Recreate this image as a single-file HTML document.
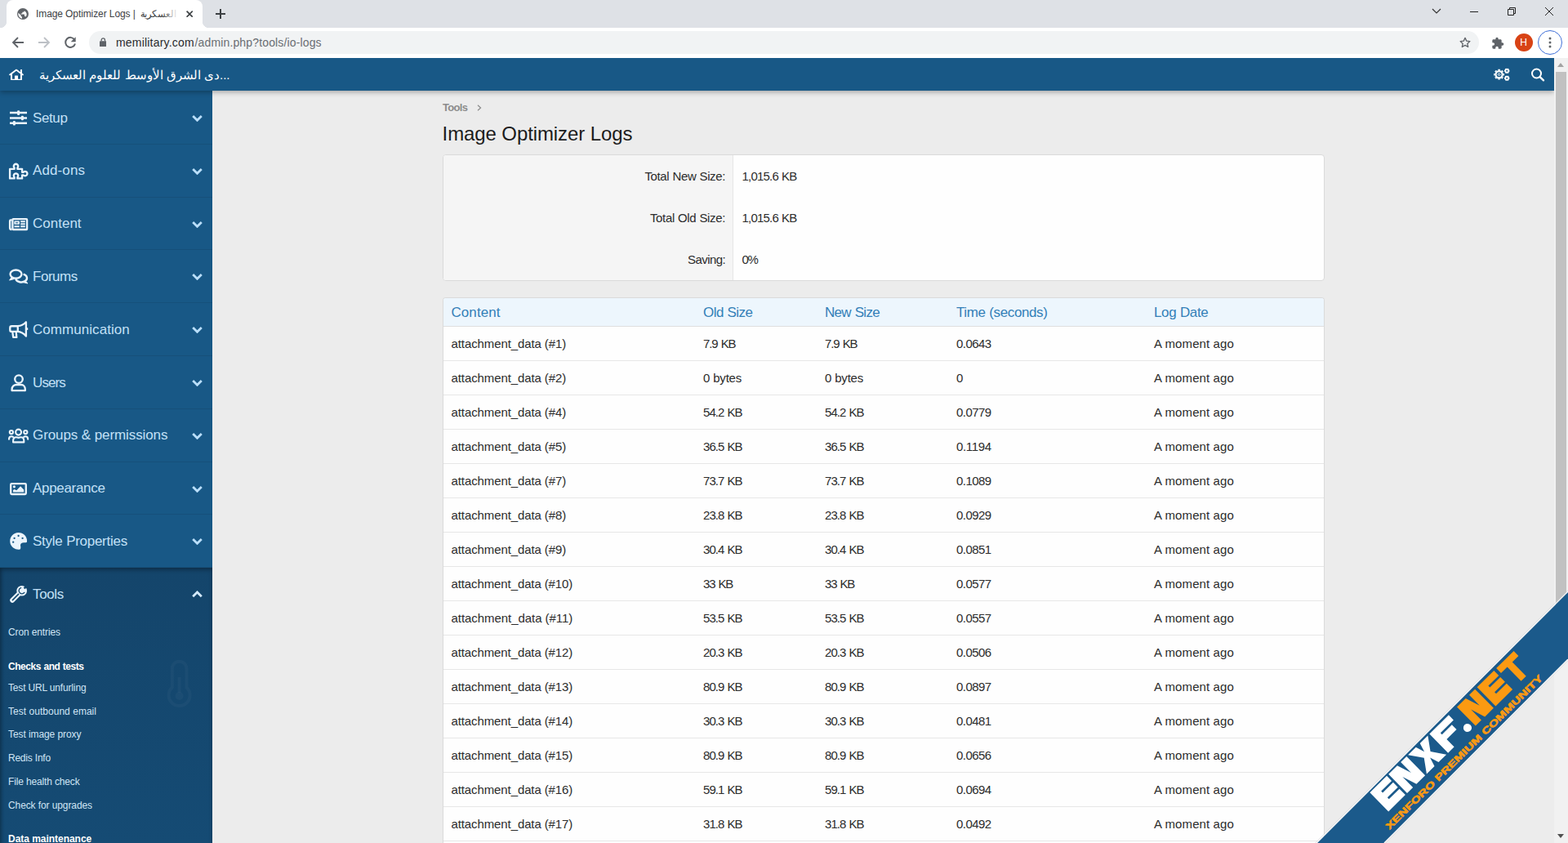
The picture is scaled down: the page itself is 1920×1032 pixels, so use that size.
<!DOCTYPE html>
<html lang="en"><head><meta charset="utf-8"><title>Image Optimizer Logs</title>
<style>
*{box-sizing:border-box;margin:0;padding:0}
html,body{width:1920px;height:1032px;overflow:hidden;background:#fff;font-family:"Liberation Sans",sans-serif;}
body{position:relative}
#chrome{position:absolute;left:0;top:0;width:1920px;height:71px;background:#fff}
#tabstrip{position:absolute;left:0;top:0;width:1920px;height:34px;background:#dee1e6}
#tab{position:absolute;left:8px;top:0;width:240px;height:34px;background:#fff;border-radius:8px 8px 0 0}
#tab:before,#tab:after{content:"";position:absolute;bottom:0;width:8px;height:8px;background:radial-gradient(circle at 0 0,#dee1e6 8px,#fff 8.5px)}
#tab:before{left:-8px}
#tab:after{right:-8px;background:radial-gradient(circle at 100% 0,#dee1e6 8px,#fff 8.5px)}
#omni{position:absolute;left:109px;top:38px;width:1702px;height:28px;border-radius:14px;background:#f1f3f4}
.ico{position:absolute}
#page{position:absolute;left:0;top:71px;width:1920px;height:961px;background:#ececec;overflow:hidden}
#hdr{position:absolute;left:0;top:0;width:1903px;height:40px;background:#185886;box-shadow:0 2px 6px rgba(0,0,0,.3)}
#side{position:absolute;left:0;top:40px;width:260px;height:921px;background:#185886}
.nav{position:absolute;left:0;width:260px;height:65px;border-bottom:1px solid #16507a}
svg.ch{position:absolute}
#tools{position:absolute;left:0;top:584px;width:260px;height:340px;background:linear-gradient(#14456b,#154b74);box-shadow:inset 0 3px 5px rgba(0,0,0,.28),inset 3px 0 4px -1px rgba(0,0,0,.18)}
#vscroll{position:absolute;left:1903px;top:0;width:17px;height:961px;background:#f1f1f1}
#vscroll .thumb{position:absolute;left:2px;top:17px;width:13px;height:700px;background:#c1c1c1}
#vscroll .up{position:absolute;left:4px;top:6px;width:0;height:0;border:4.5px solid transparent;border-top:0;border-bottom:5px solid #a3a3a3}
#vscroll .down{position:absolute;left:4px;bottom:6px;width:0;height:0;border:4.5px solid transparent;border-bottom:0;border-top:5px solid #505050}
#main{position:absolute;left:0;top:-71px;width:1903px;height:1032px}
.block{position:absolute;left:542px;width:1080px;background:#fefefe;border:1px solid #dadada;border-radius:4px}
.b1{top:189px;height:155px}
.b1 .lab{position:absolute;left:0;top:0;width:355px;height:153px;background:#f5f5f5;border-right:1px solid #e7e7e7;border-radius:3px 0 0 3px}
.b2{top:364px;height:700px;border-bottom:0}
.th{position:absolute;left:0;top:0;width:1078px;height:35px;background:#edf6fd;border-bottom:1px solid #dfdfdf;border-radius:3px 3px 0 0}
.tr{position:absolute;left:543px;width:1078px;height:42px;border-bottom:1px solid #e7e7e7}

.t{position:absolute;white-space:nowrap;font-kerning:normal}
.abs0{position:absolute;left:0;width:0;height:0}

</style></head>
<body>
<div id="chrome">
  <div id="tabstrip">
    <div id="tab">
      <svg class="ico" style="left:13px;top:10px" width="14" height="14" viewBox="0 0 24 24"><circle cx="12" cy="12" r="12" fill="#5f6368"/><path d="M10.5 21.9c-4.7-.7-8.3-4.7-8.3-9.9 0-.7.1-1.5.3-2.2L8 15v1c0 1.100.9 2 2 2zM18.400 18.400c-.3-.8-1-1.400-1.900-1.400h-1v-3c0-.55-.45-1-1-1H8v-2h2c.55 0 1-.45 1-1V8h2c1.100 0 2-.9 2-2v-.4c2.900 1.200 5 4.100 5 7.400 0 2.100-.8 4-2.100 5.400z" fill="#fff"/></svg>
            <svg class="ico" style="left:219.900px;top:13.100px" width="8.400" height="8.400" viewBox="0 0 8.400 8.400"><path d="M0.600 0.600L7.800 7.800M7.800 0.600L0.600 7.800" stroke="#3c4043" stroke-width="1.700" fill="none"/></svg>
    </div>
    <svg class="ico" style="left:264px;top:11px" width="12" height="12" viewBox="0 0 12 12"><path d="M6 0V12M0 6H12" stroke="#3c4043" stroke-width="2" fill="none"/></svg>
    <svg class="ico" style="left:1753px;top:10px" width="12" height="8" viewBox="0 0 12 8"><path d="M1 1L6 6L11 1" stroke="#333" stroke-width="1.200" fill="none"/></svg>
    <div class="ico" style="left:1800px;top:14px;width:10px;height:1px;background:#222"></div>
    <svg class="ico" style="left:1846px;top:9px" width="10" height="10" viewBox="0 0 10 10"><path d="M0.500 2.500H7.500V9.500H0.500ZM2.500 2.500V0.500H9.500V7.500H7.500" stroke="#222" stroke-width="1" fill="none"/></svg>
    <svg class="ico" style="left:1892px;top:9px" width="10" height="10" viewBox="0 0 10 10"><path d="M0 0L10 10M10 0L0 10" stroke="#222" stroke-width="1" fill="none"/></svg>
  </div>
  <!-- toolbar -->
  <svg class="ico" style="left:14px;top:44px" width="16" height="16" viewBox="0 0 16 16"><path d="M15 8H2M8 2L2 8L8 14" stroke="#5f6368" stroke-width="1.800" fill="none"/></svg>
  <svg class="ico" style="left:46px;top:44px" width="16" height="16" viewBox="0 0 16 16"><path d="M1 8H14M8 2L14 8L8 14" stroke="#bdc1c6" stroke-width="1.800" fill="none"/></svg>
  <svg class="ico" style="left:78px;top:44px" width="16" height="16" viewBox="0 0 16 16"><path d="M13.200 4.500A6 6 0 1 0 14 9.500" stroke="#5f6368" stroke-width="2" fill="none"/><path d="M14.700 1.200V7.200H8.700z" fill="#5f6368"/></svg>
  <div id="omni"></div>
  <svg class="ico" style="left:121.700px;top:46px" width="8.600" height="11.200" viewBox="0 0 10 13"><rect x="0" y="5" width="10" height="8" rx="1" fill="#5f6368"/><path d="M2.500 5V3.500a2.500 2.500 0 0 1 5 0V5" stroke="#5f6368" stroke-width="1.500" fill="none"/></svg>
  <span class="t" style="left:44px;top:11.04px;font-size:12px;line-height:12px;color:#3c4043;letter-spacing:-0.097px;">Image Optimizer Logs | </span><span class="t" style="left:142px;top:45.15px;font-size:14px;line-height:14px;color:#2a2b2e;letter-spacing:0.194px;">memilitary.com</span><span class="t" style="left:238.5px;top:45.15px;font-size:14px;line-height:14px;color:#6a6e73;letter-spacing:0.146px;">/admin.php?tools/io-logs</span><svg class="ico" style="left:170.5px;top:8.3px" width="45" height="17.00" viewBox="0 0 43.0 17.0" preserveAspectRatio="none"><defs><linearGradient id="fade" x1="0" x2="1" y1="0" y2="0"><stop offset="0.6" stop-color="#3c4043"/><stop offset="1" stop-color="#3c4043" stop-opacity="0.15"/></linearGradient></defs><text x="21.5" y="12.9" text-anchor="middle" font-family="'Liberation Sans', sans-serif" font-size="12" fill="url(#fade)" textLength="42" lengthAdjust="spacingAndGlyphs">العسكرية</text></svg>
  <svg class="ico" style="left:1786px;top:44px" width="16" height="16" viewBox="0 0 24 24"><path d="M12 3.500l2.600 5.700 6.200.7-4.600 4.200 1.300 6.100L12 17l-5.500 3.200 1.300-6.100L3.200 9.900l6.200-.7z" stroke="#5f6368" stroke-width="2" fill="none" stroke-linejoin="round"/></svg>
  <svg class="ico" style="left:1826px;top:44.500px" width="16" height="16" viewBox="0 0 24 24"><path d="M20.500 11H19V7c0-1.100-.9-2-2-2h-4V3.500a2.500 2.500 0 0 0-5 0V5H4c-1.100 0-2 .9-2 2v3.800h1.500a2.700 2.700 0 0 1 0 5.400H2V20c0 1.100.9 2 2 2h3.800v-1.500a2.700 2.700 0 0 1 5.400 0V22H17c1.100 0 2-.9 2-2v-4h1.500a2.500 2.500 0 0 0 0-5z" fill="#5f6368"/></svg>
  <div class="ico" style="left:1855px;top:41px;width:22px;height:22px;border-radius:11px;background:#d84315"></div><span class="t" style="left:1861.2px;top:46.14px;font-size:12px;line-height:12px;color:#fff;">H</span>
  <div class="ico" style="left:1883.300px;top:37px;width:29.600px;height:29.600px;border-radius:15px;border:1.700px solid #4070d8;background:#fff"></div>
  <svg class="ico" style="left:1896px;top:45px" width="4" height="14" viewBox="0 0 4 14"><circle cx="2" cy="2" r="1.500" fill="#5f6368"/><circle cx="2" cy="7" r="1.500" fill="#5f6368"/><circle cx="2" cy="12" r="1.500" fill="#5f6368"/></svg>
</div>

<div id="page">

<div id="main">
  <svg class="ico" style="left:584px;top:127.5px" width="6" height="8" viewBox="0 0 6 8"><path d="M1 0.7L4.6 4L1 7.3" stroke="#8c8c8c" stroke-width="1.2" fill="none"/></svg>
  <div class="block b1"><div class="lab"></div></div>
  <div class="block b2"><div class="th"></div></div>
  <div class="tr" style="top:400px"></div><div class="tr" style="top:442px"></div><div class="tr" style="top:484px"></div><div class="tr" style="top:526px"></div><div class="tr" style="top:568px"></div><div class="tr" style="top:610px"></div><div class="tr" style="top:652px"></div><div class="tr" style="top:694px"></div><div class="tr" style="top:736px"></div><div class="tr" style="top:778px"></div><div class="tr" style="top:820px"></div><div class="tr" style="top:862px"></div><div class="tr" style="top:904px"></div><div class="tr" style="top:946px"></div><div class="tr" style="top:988px"></div>
  <span class="t" style="left:542px;top:124.90px;font-size:13px;line-height:13px;color:#8c8c8c;font-weight:700;letter-spacing:-0.667px;">Tools</span><span class="t" style="left:541.6px;top:151.88px;font-size:24px;line-height:24px;color:#1c1c1c;letter-spacing:-0.101px;">Image Optimizer Logs</span><span class="t" style="right:1015px;top:207.70px;font-size:15px;line-height:15px;color:#2c2c2c;letter-spacing:-0.374px;word-spacing:0.374px;">Total New Size:</span><span class="t" style="left:908.5px;top:207.70px;font-size:15px;line-height:15px;color:#2c2c2c;letter-spacing:-0.804px;word-spacing:0.804px;">1,015.6 KB</span><span class="t" style="right:1015px;top:258.70px;font-size:15px;line-height:15px;color:#2c2c2c;letter-spacing:-0.361px;word-spacing:0.361px;">Total Old Size:</span><span class="t" style="left:908.5px;top:258.70px;font-size:15px;line-height:15px;color:#2c2c2c;letter-spacing:-0.804px;word-spacing:0.804px;">1,015.6 KB</span><span class="t" style="right:1015px;top:309.70px;font-size:15px;line-height:15px;color:#2c2c2c;letter-spacing:-0.592px;">Saving:</span><span class="t" style="left:908.5px;top:309.70px;font-size:15px;line-height:15px;color:#2c2c2c;letter-spacing:-1.392px;">0%</span><span class="t" style="left:552.5px;top:373.81px;font-size:17px;line-height:17px;color:#3380b8;letter-spacing:0.070px;">Content</span><span class="t" style="left:861px;top:373.81px;font-size:17px;line-height:17px;color:#3380b8;letter-spacing:-0.546px;word-spacing:0.546px;">Old Size</span><span class="t" style="left:1010px;top:373.81px;font-size:17px;line-height:17px;color:#3380b8;letter-spacing:-0.679px;word-spacing:0.679px;">New Size</span><span class="t" style="left:1171px;top:373.81px;font-size:17px;line-height:17px;color:#3380b8;letter-spacing:-0.385px;word-spacing:0.385px;">Time (seconds)</span><span class="t" style="left:1413px;top:373.81px;font-size:17px;line-height:17px;color:#3380b8;letter-spacing:-0.385px;word-spacing:0.385px;">Log Date</span><span class="t" style="left:552.5px;top:413.00px;font-size:15px;line-height:15px;color:#2c2c2c;letter-spacing:-0.097px;">attachment_data (#1)</span><span class="t" style="left:861px;top:413.00px;font-size:15px;line-height:15px;color:#2c2c2c;letter-spacing:-1.116px;word-spacing:1.116px;">7.9 KB</span><span class="t" style="left:1010px;top:413.00px;font-size:15px;line-height:15px;color:#2c2c2c;letter-spacing:-1.116px;word-spacing:1.116px;">7.9 KB</span><span class="t" style="left:1171px;top:413.00px;font-size:15px;line-height:15px;color:#2c2c2c;letter-spacing:-0.553px;">0.0643</span><span class="t" style="left:1413px;top:413.00px;font-size:15px;line-height:15px;color:#2c2c2c;letter-spacing:0.093px;">A moment ago</span><span class="t" style="left:552.5px;top:455.00px;font-size:15px;line-height:15px;color:#2c2c2c;letter-spacing:-0.097px;">attachment_data (#2)</span><span class="t" style="left:861px;top:455.00px;font-size:15px;line-height:15px;color:#2c2c2c;letter-spacing:-0.181px;">0 bytes</span><span class="t" style="left:1010px;top:455.00px;font-size:15px;line-height:15px;color:#2c2c2c;letter-spacing:-0.181px;">0 bytes</span><span class="t" style="left:1171px;top:455.00px;font-size:15px;line-height:15px;color:#2c2c2c;">0</span><span class="t" style="left:1413px;top:455.00px;font-size:15px;line-height:15px;color:#2c2c2c;letter-spacing:0.093px;">A moment ago</span><span class="t" style="left:552.5px;top:497.00px;font-size:15px;line-height:15px;color:#2c2c2c;letter-spacing:-0.097px;">attachment_data (#4)</span><span class="t" style="left:861px;top:497.00px;font-size:15px;line-height:15px;color:#2c2c2c;letter-spacing:-0.961px;word-spacing:0.961px;">54.2 KB</span><span class="t" style="left:1010px;top:497.00px;font-size:15px;line-height:15px;color:#2c2c2c;letter-spacing:-0.961px;word-spacing:0.961px;">54.2 KB</span><span class="t" style="left:1171px;top:497.00px;font-size:15px;line-height:15px;color:#2c2c2c;letter-spacing:-0.553px;">0.0779</span><span class="t" style="left:1413px;top:497.00px;font-size:15px;line-height:15px;color:#2c2c2c;letter-spacing:0.093px;">A moment ago</span><span class="t" style="left:552.5px;top:539.00px;font-size:15px;line-height:15px;color:#2c2c2c;letter-spacing:-0.097px;">attachment_data (#5)</span><span class="t" style="left:861px;top:539.00px;font-size:15px;line-height:15px;color:#2c2c2c;letter-spacing:-0.961px;word-spacing:0.961px;">36.5 KB</span><span class="t" style="left:1010px;top:539.00px;font-size:15px;line-height:15px;color:#2c2c2c;letter-spacing:-0.961px;word-spacing:0.961px;">36.5 KB</span><span class="t" style="left:1171px;top:539.00px;font-size:15px;line-height:15px;color:#2c2c2c;letter-spacing:-0.348px;">0.1194</span><span class="t" style="left:1413px;top:539.00px;font-size:15px;line-height:15px;color:#2c2c2c;letter-spacing:0.093px;">A moment ago</span><span class="t" style="left:552.5px;top:581.00px;font-size:15px;line-height:15px;color:#2c2c2c;letter-spacing:-0.097px;">attachment_data (#7)</span><span class="t" style="left:861px;top:581.00px;font-size:15px;line-height:15px;color:#2c2c2c;letter-spacing:-0.961px;word-spacing:0.961px;">73.7 KB</span><span class="t" style="left:1010px;top:581.00px;font-size:15px;line-height:15px;color:#2c2c2c;letter-spacing:-0.961px;word-spacing:0.961px;">73.7 KB</span><span class="t" style="left:1171px;top:581.00px;font-size:15px;line-height:15px;color:#2c2c2c;letter-spacing:-0.553px;">0.1089</span><span class="t" style="left:1413px;top:581.00px;font-size:15px;line-height:15px;color:#2c2c2c;letter-spacing:0.093px;">A moment ago</span><span class="t" style="left:552.5px;top:623.00px;font-size:15px;line-height:15px;color:#2c2c2c;letter-spacing:-0.097px;">attachment_data (#8)</span><span class="t" style="left:861px;top:623.00px;font-size:15px;line-height:15px;color:#2c2c2c;letter-spacing:-0.961px;word-spacing:0.961px;">23.8 KB</span><span class="t" style="left:1010px;top:623.00px;font-size:15px;line-height:15px;color:#2c2c2c;letter-spacing:-0.961px;word-spacing:0.961px;">23.8 KB</span><span class="t" style="left:1171px;top:623.00px;font-size:15px;line-height:15px;color:#2c2c2c;letter-spacing:-0.553px;">0.0929</span><span class="t" style="left:1413px;top:623.00px;font-size:15px;line-height:15px;color:#2c2c2c;letter-spacing:0.093px;">A moment ago</span><span class="t" style="left:552.5px;top:665.00px;font-size:15px;line-height:15px;color:#2c2c2c;letter-spacing:-0.097px;">attachment_data (#9)</span><span class="t" style="left:861px;top:665.00px;font-size:15px;line-height:15px;color:#2c2c2c;letter-spacing:-0.961px;word-spacing:0.961px;">30.4 KB</span><span class="t" style="left:1010px;top:665.00px;font-size:15px;line-height:15px;color:#2c2c2c;letter-spacing:-0.961px;word-spacing:0.961px;">30.4 KB</span><span class="t" style="left:1171px;top:665.00px;font-size:15px;line-height:15px;color:#2c2c2c;letter-spacing:-0.553px;">0.0851</span><span class="t" style="left:1413px;top:665.00px;font-size:15px;line-height:15px;color:#2c2c2c;letter-spacing:0.093px;">A moment ago</span><span class="t" style="left:552.5px;top:707.00px;font-size:15px;line-height:15px;color:#2c2c2c;letter-spacing:-0.105px;">attachment_data (#10)</span><span class="t" style="left:861px;top:707.00px;font-size:15px;line-height:15px;color:#2c2c2c;letter-spacing:-1.176px;word-spacing:1.176px;">33 KB</span><span class="t" style="left:1010px;top:707.00px;font-size:15px;line-height:15px;color:#2c2c2c;letter-spacing:-1.176px;word-spacing:1.176px;">33 KB</span><span class="t" style="left:1171px;top:707.00px;font-size:15px;line-height:15px;color:#2c2c2c;letter-spacing:-0.553px;">0.0577</span><span class="t" style="left:1413px;top:707.00px;font-size:15px;line-height:15px;color:#2c2c2c;letter-spacing:0.093px;">A moment ago</span><span class="t" style="left:552.5px;top:749.00px;font-size:15px;line-height:15px;color:#2c2c2c;letter-spacing:-0.051px;">attachment_data (#11)</span><span class="t" style="left:861px;top:749.00px;font-size:15px;line-height:15px;color:#2c2c2c;letter-spacing:-0.961px;word-spacing:0.961px;">53.5 KB</span><span class="t" style="left:1010px;top:749.00px;font-size:15px;line-height:15px;color:#2c2c2c;letter-spacing:-0.961px;word-spacing:0.961px;">53.5 KB</span><span class="t" style="left:1171px;top:749.00px;font-size:15px;line-height:15px;color:#2c2c2c;letter-spacing:-0.553px;">0.0557</span><span class="t" style="left:1413px;top:749.00px;font-size:15px;line-height:15px;color:#2c2c2c;letter-spacing:0.093px;">A moment ago</span><span class="t" style="left:552.5px;top:791.00px;font-size:15px;line-height:15px;color:#2c2c2c;letter-spacing:-0.105px;">attachment_data (#12)</span><span class="t" style="left:861px;top:791.00px;font-size:15px;line-height:15px;color:#2c2c2c;letter-spacing:-0.961px;word-spacing:0.961px;">20.3 KB</span><span class="t" style="left:1010px;top:791.00px;font-size:15px;line-height:15px;color:#2c2c2c;letter-spacing:-0.961px;word-spacing:0.961px;">20.3 KB</span><span class="t" style="left:1171px;top:791.00px;font-size:15px;line-height:15px;color:#2c2c2c;letter-spacing:-0.553px;">0.0506</span><span class="t" style="left:1413px;top:791.00px;font-size:15px;line-height:15px;color:#2c2c2c;letter-spacing:0.093px;">A moment ago</span><span class="t" style="left:552.5px;top:833.00px;font-size:15px;line-height:15px;color:#2c2c2c;letter-spacing:-0.105px;">attachment_data (#13)</span><span class="t" style="left:861px;top:833.00px;font-size:15px;line-height:15px;color:#2c2c2c;letter-spacing:-0.961px;word-spacing:0.961px;">80.9 KB</span><span class="t" style="left:1010px;top:833.00px;font-size:15px;line-height:15px;color:#2c2c2c;letter-spacing:-0.961px;word-spacing:0.961px;">80.9 KB</span><span class="t" style="left:1171px;top:833.00px;font-size:15px;line-height:15px;color:#2c2c2c;letter-spacing:-0.553px;">0.0897</span><span class="t" style="left:1413px;top:833.00px;font-size:15px;line-height:15px;color:#2c2c2c;letter-spacing:0.093px;">A moment ago</span><span class="t" style="left:552.5px;top:875.00px;font-size:15px;line-height:15px;color:#2c2c2c;letter-spacing:-0.105px;">attachment_data (#14)</span><span class="t" style="left:861px;top:875.00px;font-size:15px;line-height:15px;color:#2c2c2c;letter-spacing:-0.961px;word-spacing:0.961px;">30.3 KB</span><span class="t" style="left:1010px;top:875.00px;font-size:15px;line-height:15px;color:#2c2c2c;letter-spacing:-0.961px;word-spacing:0.961px;">30.3 KB</span><span class="t" style="left:1171px;top:875.00px;font-size:15px;line-height:15px;color:#2c2c2c;letter-spacing:-0.553px;">0.0481</span><span class="t" style="left:1413px;top:875.00px;font-size:15px;line-height:15px;color:#2c2c2c;letter-spacing:0.093px;">A moment ago</span><span class="t" style="left:552.5px;top:917.00px;font-size:15px;line-height:15px;color:#2c2c2c;letter-spacing:-0.105px;">attachment_data (#15)</span><span class="t" style="left:861px;top:917.00px;font-size:15px;line-height:15px;color:#2c2c2c;letter-spacing:-0.961px;word-spacing:0.961px;">80.9 KB</span><span class="t" style="left:1010px;top:917.00px;font-size:15px;line-height:15px;color:#2c2c2c;letter-spacing:-0.961px;word-spacing:0.961px;">80.9 KB</span><span class="t" style="left:1171px;top:917.00px;font-size:15px;line-height:15px;color:#2c2c2c;letter-spacing:-0.553px;">0.0656</span><span class="t" style="left:1413px;top:917.00px;font-size:15px;line-height:15px;color:#2c2c2c;letter-spacing:0.093px;">A moment ago</span><span class="t" style="left:552.5px;top:959.00px;font-size:15px;line-height:15px;color:#2c2c2c;letter-spacing:-0.105px;">attachment_data (#16)</span><span class="t" style="left:861px;top:959.00px;font-size:15px;line-height:15px;color:#2c2c2c;letter-spacing:-0.961px;word-spacing:0.961px;">59.1 KB</span><span class="t" style="left:1010px;top:959.00px;font-size:15px;line-height:15px;color:#2c2c2c;letter-spacing:-0.961px;word-spacing:0.961px;">59.1 KB</span><span class="t" style="left:1171px;top:959.00px;font-size:15px;line-height:15px;color:#2c2c2c;letter-spacing:-0.553px;">0.0694</span><span class="t" style="left:1413px;top:959.00px;font-size:15px;line-height:15px;color:#2c2c2c;letter-spacing:0.093px;">A moment ago</span><span class="t" style="left:552.5px;top:1001.00px;font-size:15px;line-height:15px;color:#2c2c2c;letter-spacing:-0.105px;">attachment_data (#17)</span><span class="t" style="left:861px;top:1001.00px;font-size:15px;line-height:15px;color:#2c2c2c;letter-spacing:-0.961px;word-spacing:0.961px;">31.8 KB</span><span class="t" style="left:1010px;top:1001.00px;font-size:15px;line-height:15px;color:#2c2c2c;letter-spacing:-0.961px;word-spacing:0.961px;">31.8 KB</span><span class="t" style="left:1171px;top:1001.00px;font-size:15px;line-height:15px;color:#2c2c2c;letter-spacing:-0.553px;">0.0492</span><span class="t" style="left:1413px;top:1001.00px;font-size:15px;line-height:15px;color:#2c2c2c;letter-spacing:0.093px;">A moment ago</span>
</div>

<div id="side">
<div class="nav" style="top:0px;height:66px"></div>
<svg class="ch" style="left:235px;top:29.0px" width="13" height="9" viewBox="0 0 13 9"><path d="M1.200 2L6.500 7.300L11.800 2" stroke="#b9defa" stroke-width="2.800" fill="none"/></svg>
<div class="nav" style="top:66px;height:65px"></div>
<svg class="ch" style="left:235px;top:93.8px" width="13" height="9" viewBox="0 0 13 9"><path d="M1.200 2L6.500 7.300L11.800 2" stroke="#b9defa" stroke-width="2.800" fill="none"/></svg>
<div class="nav" style="top:131px;height:64px"></div>
<svg class="ch" style="left:235px;top:158.6px" width="13" height="9" viewBox="0 0 13 9"><path d="M1.200 2L6.500 7.300L11.800 2" stroke="#b9defa" stroke-width="2.800" fill="none"/></svg>
<div class="nav" style="top:195px;height:65px"></div>
<svg class="ch" style="left:235px;top:223.3px" width="13" height="9" viewBox="0 0 13 9"><path d="M1.200 2L6.500 7.300L11.800 2" stroke="#b9defa" stroke-width="2.800" fill="none"/></svg>
<div class="nav" style="top:260px;height:65px"></div>
<svg class="ch" style="left:235px;top:288.1px" width="13" height="9" viewBox="0 0 13 9"><path d="M1.200 2L6.500 7.300L11.800 2" stroke="#b9defa" stroke-width="2.800" fill="none"/></svg>
<div class="nav" style="top:325px;height:65px"></div>
<svg class="ch" style="left:235px;top:352.9px" width="13" height="9" viewBox="0 0 13 9"><path d="M1.200 2L6.500 7.300L11.800 2" stroke="#b9defa" stroke-width="2.800" fill="none"/></svg>
<div class="nav" style="top:390px;height:65px"></div>
<svg class="ch" style="left:235px;top:417.7px" width="13" height="9" viewBox="0 0 13 9"><path d="M1.200 2L6.500 7.300L11.800 2" stroke="#b9defa" stroke-width="2.800" fill="none"/></svg>
<div class="nav" style="top:455px;height:64px"></div>
<svg class="ch" style="left:235px;top:482.5px" width="13" height="9" viewBox="0 0 13 9"><path d="M1.200 2L6.500 7.300L11.800 2" stroke="#b9defa" stroke-width="2.800" fill="none"/></svg>
<div class="nav" style="top:519px;height:65px"></div>
<svg class="ch" style="left:235px;top:547.2px" width="13" height="9" viewBox="0 0 13 9"><path d="M1.200 2L6.500 7.300L11.800 2" stroke="#b9defa" stroke-width="2.800" fill="none"/></svg>
<div id="tools"></div>
<svg class="ch" style="left:235px;top:612px" width="13" height="9" viewBox="0 0 13 9"><path d="M1.200 7.300L6.500 2L11.800 7.300" stroke="#d3e9fa" stroke-width="2.800" fill="none"/></svg>
<svg class="ico" style="left:200px;top:690px" width="40" height="70" viewBox="200 801 40 70" fill="none" stroke="#fff" stroke-opacity=".03" stroke-width="4"><path d="M210.800 818.500A8.800 8.800 0 0 1 228.400 818.500V841.500A13 13 0 1 1 210.800 841.500Z"/><path d="M219.600 829V848" stroke-width="4"/><circle cx="219.600" cy="852" r="5" fill="#fff" fill-opacity=".03" stroke="none"/></svg>
<div class="abs0" style="top:-111px"><svg class="ico" style="left:0;top:111px" width="50" height="660" viewBox="0 111 50 660" fill="none" stroke="#eaf4fc" stroke-width="2.35" stroke-linejoin="round"><path d="M12 138.1H33M12 144.5H33M12 150.8H33" stroke-width="2.5"/><g fill="#eaf4fc" stroke="none"><rect x="21.1" y="135.3" width="3" height="5.6" rx="1"/><rect x="25.9" y="141.7" width="3" height="5.6" rx="1"/><rect x="15.9" y="148" width="3" height="5.6" rx="1"/></g><path d="M12.1 218.4V206.8H17.6V205.4A2.7 2.7 0 1 1 21.4 205.4V206.8H27.1V210.7H28.8A2.7 2.7 0 1 1 28.8 214.5H27.1V218.4H21.4V217A2.7 2.7 0 1 0 17.6 217V218.4Z"/><rect x="15.4" y="268.1" width="17.7" height="12.9" rx="0.8"/><path d="M14.6 269.4H13.1Q12.1 269.4 12.1 270.4V279Q12.1 281 14.4 281"/><rect x="18.2" y="271.4" width="4.9" height="2.6" stroke-width="1.7"/><path d="M17.5 277.2H23.8M25.2 271.3H30.8M25.2 274.3H30.8M25.2 277.2H30.8" stroke-width="1.9"/><ellipse cx="19.5" cy="335.6" rx="7" ry="5.1"/><path d="M14.2 339.4L11.6 343.1L17.2 341.5Z" fill="#eaf4fc" stroke-width="1"/><path d="M28.6 335.6A7 5.1 0 1 1 19.3 341.8"/><path d="M31.6 344.2L34 347L28.2 345.6Z" fill="#eaf4fc" stroke-width="1"/><path d="M21.8 399.2H14.3A2 2 0 0 0 12.3 401.2V403.9A2 2 0 0 0 14.3 405.9H21.8M21.8 399.2C26 399 29.6 396.8 31.9 394.300V411.500C29.6 408.8 26 406.1 21.8 405.900ZM15.3 406.100L16.2 412.900H20.300L19.7 406.1"/><rect x="32.8" y="401.2" width="1.4" height="2.8" fill="#eaf4fc" stroke="none"/><circle cx="23" cy="464.1" r="4.8"/><path d="M14.6 478.100V476.500C14.6 473 17.5 471 20 471H26C28.5 471 30.8 473 30.8 476.500V478.100Z"/><g stroke-width="2.1" stroke-linecap="round"><circle cx="22.6" cy="529.1" r="3.5"/><circle cx="13.9" cy="529.1" r="2.1"/><circle cx="31.3" cy="529.1" r="2.1"/><path d="M16.1 541.400V539.600C16.1 536.6 18 535.2 20 535.200C21 535.2 21.5 535.9 22.7 535.900C23.9 535.9 24.4 535.2 25.4 535.200C27.4 535.2 29.3 536.6 29.3 539.600V541.400Z"/><path d="M11 537.700C11 535.3 12.6 534.3 14.2 534.300C15 534.3 15.6 534.5 16 534.800M34.2 537.700C34.2 535.3 32.6 534.3 31 534.300C30.2 534.3 29.6 534.5 29.2 534.8"/></g><rect x="13.2" y="592.1" width="18.6" height="12.9" rx="1.2"/><g fill="#eaf4fc" stroke="none"><circle cx="17.4" cy="595.8" r="1.6"/><path d="M16 602.400V600L17.6 598.900L20.3 600.200L25.1 595.200L29.2 599.600V602.400Z"/></g><path d="M33 663A10.4 10.4 0 1 0 24.6 672.500C26 671 25 668.5 25 667.500C25 665.2 27 664.2 29 664.200H31.500C32.3 664.2 33 663.8 33 663Z" fill="#eaf4fc" stroke="none"/><g fill="#185886" stroke="none"><circle cx="22.6" cy="656" r="1.150"/><circle cx="17.6" cy="658.9" r="1.150"/><circle cx="27.6" cy="658.9" r="1.150"/><circle cx="16.2" cy="663.7" r="1.150"/></g><path d="M15.1 734.900L23.5 726.5" stroke-width="5.8" stroke-linecap="round"/><circle cx="26.7" cy="723.3" r="6.3" fill="#eaf4fc" stroke="none"/><path d="M15.4 734.600L22.6 727.4" stroke="#14486e" stroke-width="1.5" stroke-linecap="round"/><path d="M25.6 719.700A3.5 3.5 0 0 0 24.3 725.700A3.5 3.5 0 0 0 29.8 725.4" stroke="#14486e" stroke-width="1.4" stroke-linecap="round"/><path d="M29.6 720.400L33.5 716.5" stroke="#14486e" stroke-width="2.6"/></svg></div>
<div class="abs0" style="top:-111px"><span class="t" style="left:40px;top:135.61px;font-size:17px;line-height:17px;color:#c3e0f6;letter-spacing:-0.386px;">Setup</span><span class="t" style="left:40px;top:200.39px;font-size:17px;line-height:17px;color:#c3e0f6;letter-spacing:0.103px;">Add-ons</span><span class="t" style="left:40px;top:265.17px;font-size:17px;line-height:17px;color:#c3e0f6;letter-spacing:0.008px;">Content</span><span class="t" style="left:40px;top:329.95px;font-size:17px;line-height:17px;color:#c3e0f6;letter-spacing:-0.477px;">Forums</span><span class="t" style="left:40px;top:394.73px;font-size:17px;line-height:17px;color:#c3e0f6;letter-spacing:0.055px;">Communication</span><span class="t" style="left:40px;top:459.51px;font-size:17px;line-height:17px;color:#c3e0f6;letter-spacing:-0.890px;">Users</span><span class="t" style="left:40px;top:524.29px;font-size:17px;line-height:17px;color:#c3e0f6;letter-spacing:-0.094px;">Groups &amp; permissions</span><span class="t" style="left:40px;top:589.07px;font-size:17px;line-height:17px;color:#c3e0f6;letter-spacing:-0.314px;">Appearance</span><span class="t" style="left:40px;top:653.85px;font-size:17px;line-height:17px;color:#c3e0f6;letter-spacing:-0.276px;word-spacing:0.276px;">Style Properties</span><span class="t" style="left:40px;top:718.63px;font-size:17px;line-height:17px;color:#c3e0f6;letter-spacing:-0.375px;">Tools</span><span class="t" style="left:10px;top:767.74px;font-size:12px;line-height:12px;color:#d0e5f5;letter-spacing:-0.120px;">Cron entries</span><span class="t" style="left:10px;top:809.64px;font-size:12px;line-height:12px;color:#fff;font-weight:700;letter-spacing:-0.438px;word-spacing:0.438px;">Checks and tests</span><span class="t" style="left:10px;top:835.74px;font-size:12px;line-height:12px;color:#d0e5f5;letter-spacing:-0.159px;">Test URL unfurling</span><span class="t" style="left:10px;top:864.54px;font-size:12px;line-height:12px;color:#d0e5f5;letter-spacing:0.032px;">Test outbound email</span><span class="t" style="left:10px;top:893.34px;font-size:12px;line-height:12px;color:#d0e5f5;letter-spacing:-0.084px;">Test image proxy</span><span class="t" style="left:10px;top:922.14px;font-size:12px;line-height:12px;color:#d0e5f5;letter-spacing:-0.239px;word-spacing:0.239px;">Redis Info</span><span class="t" style="left:10px;top:950.94px;font-size:12px;line-height:12px;color:#d0e5f5;letter-spacing:-0.148px;">File health check</span><span class="t" style="left:10px;top:979.74px;font-size:12px;line-height:12px;color:#d0e5f5;letter-spacing:-0.099px;">Check for upgrades</span><span class="t" style="left:10px;top:1020.84px;font-size:12px;line-height:12px;color:#fff;font-weight:700;letter-spacing:-0.032px;">Data maintenance</span></div>
</div>

<div id="hdr">
  <svg class="ico" style="left:11px;top:12.500px" width="18" height="14.500" viewBox="0 0 576 512" preserveAspectRatio="none"><path fill="#fff" d="M570.2 244.600L512 197.800V48c0-8.800-7.200-16-16-16h-32c-8.800 0-16 7.200-16 16v98.300L313.400 37.900c-14.800-11.900-36-11.900-50.800 0L5.800 244.600c-6.900 5.500-8 15.600-2.500 22.500l20 24.900c5.500 6.900 15.600 8 22.500 2.500L64 279.900V464c0 26.500 21.500 48 48 48h352c26.500 0 48-21.500 48-48V279.900l18.200 14.600c6.900 5.500 17 4.400 22.500-2.500l20-24.900c5.500-6.900 4.400-17-2.500-22.500zM448 448H352V320c0-8.800-7.200-16-16-16h-96c-8.800 0-16 7.200-16 16v128h-96V228.400l160-128.800 160 128.800z"/></svg>
  <span class="t" dir="rtl" style="left:54.5px;top:9.6px;width:227px;height:22.8px;direction:rtl;text-align:right;font-family:'Liberation Sans',sans-serif;font-size:15px;line-height:22.8px;color:#fff;">...دى الشرق الأوسط للعلوم العسكرية</span>
<svg class="ico" style="left:1820px;top:5px" width="80" height="30" viewBox="1820 76 80 30" fill="none" stroke="#fff"><circle cx="1835.6" cy="91.2" r="4.1" stroke-width="2.2"/><circle cx="1835.6" cy="91.2" r="1.3" stroke-width="1"/><path d="M1840.70 91.20L1842.00 91.20M1839.21 94.81L1840.13 95.73M1835.60 96.30L1835.60 97.60M1831.99 94.81L1831.07 95.73M1830.50 91.20L1829.20 91.20M1831.99 87.59L1831.07 86.67M1835.60 86.10L1835.60 84.80M1839.21 87.59L1840.13 86.67" stroke-width="2.6"/><circle cx="1845.2" cy="86.8" r="1.9" stroke-width="1.7"/><path d="M1847.10 86.80L1848.40 86.80M1846.15 88.45L1846.80 89.57M1844.25 88.45L1843.60 89.57M1843.30 86.80L1842.00 86.80M1844.25 85.15L1843.60 84.03M1846.15 85.15L1846.80 84.03" stroke-width="1.9"/><circle cx="1845.2" cy="95.8" r="1.9" stroke-width="1.7"/><path d="M1847.10 95.80L1848.40 95.80M1846.15 97.45L1846.80 98.57M1844.25 97.45L1843.60 98.57M1843.30 95.80L1842.00 95.80M1844.25 94.15L1843.60 93.03M1846.15 94.15L1846.80 93.03" stroke-width="1.9"/><circle cx="1881.5" cy="90" r="5.5" stroke-width="2"/><path d="M1885.600 94.100L1890 98.4" stroke-width="2.3" stroke-linecap="round"/></svg>
</div>

<div id="vscroll"><div class="up"></div><div class="thumb"></div><div class="down"></div></div>
</div>
<svg id="ribbon" style="position:absolute;left:1560px;top:680px" width="360" height="352" viewBox="1560 680 360 352"><path d="M1613 1032L1920 725V806.300L1694.3 1032Z" fill="#1b5a8b"/><path d="M1611.8 1032L1920 723.800M1695.1 1032L1920 807.1" stroke="#fff" stroke-width="1.1" fill="none"/><path d="M1610.6 1032L1920 722.600M1696.3 1032L1920 808.3" stroke="#c9c9cc" stroke-width="0.8" fill="none" opacity=".7"/><g transform="translate(1677.4 970.2) rotate(-44.5)"><path d="M0 0H29V8.5H11V11.2H29V19.4H11V22.1H29V32.5H0ZM32 0H47L53 18.2V0H63V32.5H48L42 14.3V32.5H32ZM65.5 0H79.0L82.5 11.2L86.0 0H99.5L88.0 16.25L99.5 32.5H86.0L82.5 21.2L79.0 32.5H65.5L77.0 16.25ZM102.3 0H135.3V8.5H112.8V11.2H129.8V19.4H112.8V32.5H102.3Z" fill="#fff"/><circle cx="140.8" cy="27.3" r="5.1" fill="#fff"/><path d="M149.5 0H164.5L170.5 18.2V0H180.5V32.5H165.5L159.5 14.3V32.5H149.5ZM184 0H213V8.5H195V11.2H213V19.4H195V22.1H213V32.5H184ZM217 0H247V8.3H236.3V32.5H227.7V8.3H217Z" fill="#fb9a12"/><text x="-15" y="49.5" font-family="Liberation Sans" font-weight="700" font-size="11.4" fill="#fb9a12" stroke="#fb9a12" stroke-width="0.6" stroke-linejoin="round" textLength="264" lengthAdjust="spacingAndGlyphs">XENFORO PREMIUM COMMUNITY</text></g></svg>
</body></html>
